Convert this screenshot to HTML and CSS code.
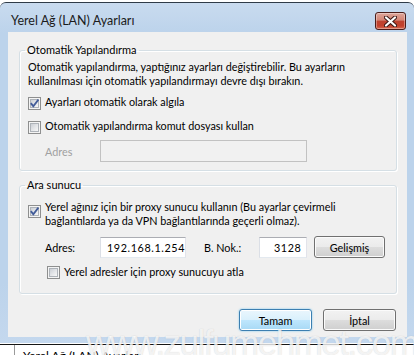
FILE: index.html
```html
<!DOCTYPE html>
<html lang="tr">
<head>
    <meta charset="UTF-8">
    <title>Yerel Ağ (LAN) Ayarları</title>
    <link rel="stylesheet" href="styles.css">
</head>
<body>
    <div class="window">
        <div class="titlebar">
            <span class="title">Yerel Ağ (LAN) Ayarları</span>
            <button class="close" title="Kapat">
                <svg width="13" height="11" viewBox="0 0 13 11">
                    <path d="M2 1.5 L11 9.5 M11 1.5 L2 9.5" stroke="#3d1a17" stroke-width="4.2" stroke-linecap="round"/>
                    <path d="M2 1.5 L11 9.5 M11 1.5 L2 9.5" stroke="#fff" stroke-width="2.2" stroke-linecap="round"/>
                </svg>
            </button>
        </div>

        <div class="client">
            <fieldset class="group group-auto">
                <legend>Otomatik Yapılandırma</legend>
                <p class="desc">Otomatik yapılandırma, yaptığınız ayarları değiştirebilir. Bu ayarların<br>kullanılması için otomatik yapılandırmayı devre dışı bırakın.</p>
                <label class="check check-detect">
                    <span class="box checked">
                        <svg width="11" height="11" viewBox="0 0 11 11"><path d="M1.8 5.2 L4.3 8.2 L9.4 1.6" fill="none" stroke="#425c99" stroke-width="1.8"/></svg>
                    </span>
                    <span>Ayarları otomatik olarak algıla</span>
                </label>
                <label class="check check-script">
                    <span class="box"></span>
                    <span>Otomatik yapılandırma komut dosyası kullan</span>
                </label>
                <div class="field-row script-row disabled">
                    <span class="field-label">Adres</span>
                    <span class="textbox script-address"></span>
                </div>
            </fieldset>

            <fieldset class="group group-proxy">
                <legend>Ara sunucu</legend>
                <label class="check check-proxy">
                    <span class="box checked">
                        <svg width="11" height="11" viewBox="0 0 11 11"><path d="M1.8 5.2 L4.3 8.2 L9.4 1.6" fill="none" stroke="#425c99" stroke-width="1.8"/></svg>
                    </span>
                    <span>Yerel ağınız için bir proxy sunucu kullanın (Bu ayarlar çevirmeli<br>bağlantılarda ya da VPN bağlantılarında geçerli olmaz).</span>
                </label>
                <div class="field-row proxy-row">
                    <span class="field-label">Adres:</span>
                    <span class="textbox proxy-address">192.168.1.254</span>
                    <span class="field-label port-label">B. Nok.:</span>
                    <span class="textbox proxy-port">3128</span>
                    <button class="btn advanced">Gelişmiş</button>
                </div>
                <label class="check check-bypass">
                    <span class="box"></span>
                    <span>Yerel adresler için proxy sunucuyu atla</span>
                </label>
            </fieldset>

            <div class="actions">
                <button class="btn default">Tamam</button>
                <button class="btn">İptal</button>
            </div>
        </div>
    </div>

    <div class="behind">
        <span class="behind-title">Yerel Ağ (LAN) Ayarları</span>
    </div>

    <div class="watermark">www.zulfumehmet.com</div>
</body>
</html>
```

FILE: styles.css
```css
* { margin: 0; padding: 0; box-sizing: border-box; }
body {
    font-family: Lato, "Open Sans", sans-serif;
    font-size: 10.8px;
    color: #000;
    background: #fff;
    width: 414px;
    height: 355px;
    overflow: hidden;
    position: relative;
}
button { font: inherit; color: inherit; }

/* window frame */
.window {
    margin-top: 2px;
    border-top: 1px solid #2f3b48;
    border-radius: 6px 6px 0 0;
    background: linear-gradient(#c9dbef 0px, #bcd3eb 30px, #bcd3eb 280px, #c4d8ee 100%);
    padding: 0 7px 6px 8px;
}
.titlebar {
    height: 29px;
    display: flex;
    justify-content: space-between;
    align-items: flex-start;
}
.title {
    margin: 10px 0 0 3px;
    line-height: 15px;
    font-size: 12.5px;
    color: #1b1b1b;
}
.close {
    margin: 9px 1px 0 0;
    width: 31px;
    height: 18px;
    border: 1px solid #4a1c19;
    border-radius: 3px;
    background: linear-gradient(#dea69b 0%, #d48575 45%, #bd4330 50%, #c2412d 80%, #d66a52 100%);
    box-shadow: inset 0 0 0 1px rgba(255, 255, 255, 0.35);
    display: flex;
    align-items: center;
    justify-content: center;
}

.client {
    background: #f0f0f0;
    height: 305px;
    padding: 0 10px 0 11px;
    display: flex;
    flex-direction: column;
}

/* group boxes */
.group {
    border: 1px solid #d5dfe5;
    border-radius: 3px;
    box-shadow: inset 1px 1px 0 #fff, 1px 1px 0 #fff;
    padding: 3px 8px 8px 8px;
}
.group legend {
    margin-left: -3px;
    padding: 0 2px;
    line-height: 14px;
    font-size: 11px;
}
.group-auto { margin-top: 11px; }
.group-proxy { margin-top: 7px; padding-top: 8px; padding-bottom: 14px; }

.desc { line-height: 14px; white-space: nowrap; }

.check {
    display: flex;
    align-items: flex-start;
    gap: 4px;
    line-height: 14px;
    white-space: nowrap;
}
.box {
    flex: none;
    width: 13px;
    height: 13px;
    margin-top: 2px;
    border: 1px solid #8e8f8f;
    background: #f4f4f4;
    position: relative;
}
.box::before {
    content: "";
    position: absolute;
    inset: 1px;
    border: 1px solid #aeb3b9;
    background: linear-gradient(135deg, #cbcfd5 0%, #e3e5e8 50%, #f7f7f7 100%);
}
.box svg { position: absolute; left: 0; top: 0; }

.check-detect { margin-top: 7px; }
.check-script { margin-top: 9px; }
.check-proxy .box { margin-top: 5px; }
.check-bypass { margin-top: 7px; margin-left: 19px; }
.check-bypass .box { margin-top: 1px; }

/* text fields */
.field-row {
    display: flex;
    align-items: center;
    margin-left: 17px;
}
.field-label { width: 55px; flex: none; }
.disabled .field-label { color: #a0a0a0; }
.textbox {
    height: 21px;
    line-height: 19px;
    padding-left: 6px;
    border: 1px solid;
    border-color: #abadb3 #e2e3ea #e3e9ef #dbdfe6;
    background: #fff;
    white-space: nowrap;
    letter-spacing: 0.6px;
}
.script-row { margin-top: 6px; }
.script-address {
    width: 207px;
    height: 22px;
    border-color: #c2c2c2;
    background: #f1f1f1;
}
.proxy-row { margin-top: 8px; }
.proxy-address { width: 86px; }
.port-label { margin-left: 18px; }
.proxy-port { width: 48px; padding-left: 14px; }

/* push buttons */
.btn {
    height: 22px;
    border: 1px solid #707070;
    border-radius: 3px;
    background: linear-gradient(#f2f2f2 0%, #ebebeb 50%, #dddddd 51%, #cfcfcf 100%);
    box-shadow: inset 0 0 0 1px #fbfbfb;
}
.advanced { width: 71px; margin-left: 7px; }

.actions {
    margin-top: 15px;
    display: flex;
    justify-content: flex-end;
    gap: 11px;
    padding-right: 1px;
}
.actions .btn { width: 73px; }
.btn.default {
    border-color: #3c7fb1;
    background: linear-gradient(#eaf6fd 0%, #d9f0fc 50%, #bee6fd 51%, #a7d9f5 100%);
    box-shadow: inset 0 0 0 1px #fff, 0 0 2px #6ac3f0;
}

/* window behind the dialog */
.behind {
    border-top: 1px solid #161616;
    height: 12px;
    margin-top: 1px;
    display: flex;
}
.behind-title {
    margin-left: 14px;
    border-left: 1px solid #9a9a9a;
    padding: 3px 0 0 8px;
    font-size: 12px;
    line-height: 15px;
}

.watermark {
    position: absolute;
    left: 86px;
    top: 328px;
    font-family: "Liberation Sans", sans-serif;
    font-size: 35px;
    line-height: 30px;
    letter-spacing: -1.5px;
    color: rgba(255, 255, 255, 0.75);
    text-shadow: 0 0 1px rgba(120, 120, 120, 0.35);
    white-space: nowrap;
    pointer-events: none;
}
```
